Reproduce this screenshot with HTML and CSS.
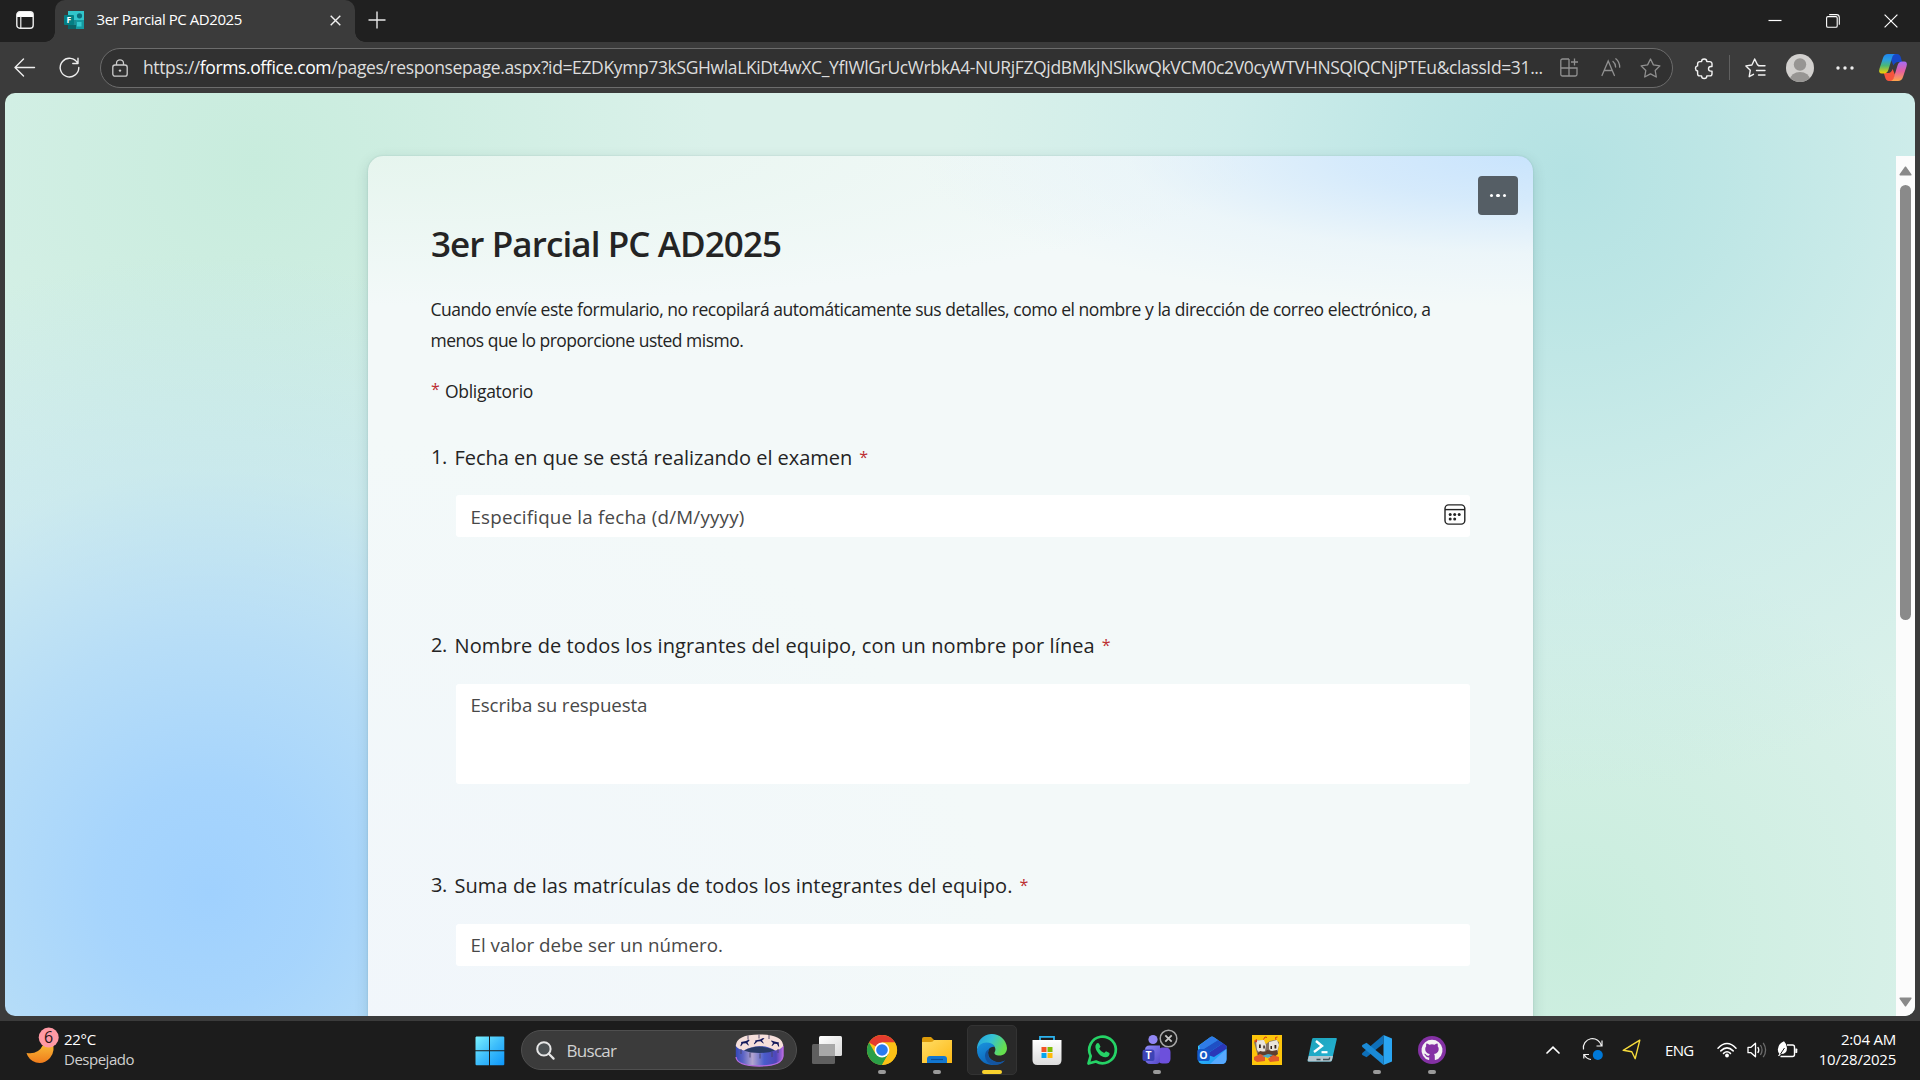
FILE: index.html
```
<!DOCTYPE html>
<html lang="es">
<head>
<meta charset="utf-8">
<title>3er Parcial PC AD2025</title>
<link rel="stylesheet" href="styles.css">
</head>
<body>
<div class="screen">
  <header class="tabstrip">
    <div class="tab-actions">
      <svg width="18" height="18" viewBox="0 0 18 18"><rect x=".8" y=".8" width="16.4" height="16.4" rx="3" fill="none" stroke="#eee" stroke-width="1.4"/><path d="M1 4a3 3 0 0 1 3-3h10a3 3 0 0 1 3 3v2H1z" fill="#fff"/><path d="M4.8 5v12" stroke="#eee" stroke-width="1.2"/></svg>
    </div>
    <div class="tab">
      <svg class="favicon" width="20" height="18" viewBox="0 0 20 18"><rect x="4" y="0" width="16" height="18" rx="1" fill="#1b8e95"/><rect x="4" y="0" width="16" height="9" fill="#31c5cb"/><rect x="12" y="9" width="8" height="9" fill="#159aa1"/><circle cx="15.5" cy="4.8" r="2.6" fill="#0b6e7c"/><rect x="13" y="11" width="4.500" height="4.500" fill="#36c9cf"/><path d="M4 14h8v4H4z" fill="#0b6468"/><rect x="0" y="4" width="10" height="10" rx="1" fill="#037f84"/><text x="2.6" y="12" class="fav-letter">F</text></svg>
      <span class="tab-title">3er Parcial PC AD2025</span>
      <svg class="tab-close" width="11" height="11" viewBox="0 0 11 11"><path d="M.7.7l9.600 9.600M10.300.7.7 10.300" stroke="#f2f2f2" stroke-width="1.400"/></svg>
    </div>
    <svg class="new-tab" width="18" height="18" viewBox="0 0 18 18"><path d="M9 .5v17M.5 9h17" stroke="#e8e8e8" stroke-width="1.400"/></svg>
    <div class="window-controls">
      <svg width="14" height="14" viewBox="0 0 14 14"><path d="M.5 6.500h13" stroke="#fff" stroke-width="1.200"/></svg>
      <svg width="14" height="14" viewBox="0 0 14 14"><rect x=".6" y="2.600" width="10.600" height="10.600" rx="1.300" fill="none" stroke="#fff" stroke-width="1.100"/><path d="M3.200.6h7.300a2.800 2.800 0 0 1 2.800 2.800v7.400" fill="none" stroke="#fff" stroke-width="1.100"/></svg>
      <svg width="14" height="14" viewBox="0 0 14 14"><path d="M.6.6l12.800 12.800M13.400.6.6 13.400" stroke="#fff" stroke-width="1.200"/></svg>
    </div>
  </header>

  <div class="toolbar">
    <svg class="back" width="21" height="19" viewBox="0 0 21 19"><path d="M9.500 1 1 9.500 9.500 18M1.200 9.500H20.500" fill="none" stroke="#eee" stroke-width="1.400" stroke-linecap="round" stroke-linejoin="round"/></svg>
    <svg class="reload" width="21" height="21" viewBox="0 0 21 21"><path d="M18.700 6.200A9.300 9.300 0 1 0 19.800 10.500M19 1.300V6.500H13.800" fill="none" stroke="#eee" stroke-width="1.400" stroke-linecap="round" stroke-linejoin="round"/></svg>
    <div class="address">
      <svg class="lock" width="16" height="18" viewBox="0 0 16 18"><rect x=".8" y="6" width="14.400" height="11.200" rx="2.200" fill="none" stroke="#ccc" stroke-width="1.300"/><path d="M4.500 6V4.300a3.500 3.500 0 0 1 7 0V6" fill="none" stroke="#ccc" stroke-width="1.300"/><circle cx="8" cy="11.600" r="1.200" fill="#ccc"/></svg>
      <span class="url">https://<b>forms.office.com</b>/pages/responsepage.aspx?id=EZDKymp73kSGHwlaLKiDt4wXC_YfIWlGrUcWrbkA4-NURjFZQjdBMkJNSlkwQkVCM0c2V0cyWTVHNSQlQCNjPTEu&amp;classId=31...</span>
      <svg class="in-apps" width="19" height="19" viewBox="0 0 19 19"><path d="M9 1H2.500A1.700 1.700 0 0 0 .8 2.700v13.600A1.700 1.700 0 0 0 2.500 18H15.300A1.700 1.700 0 0 0 17 16.300V10H.8M9 1V18M14.500.5v7M11 4h7" fill="none" stroke="#909090" stroke-width="1.300"/></svg>
      <svg class="in-read" width="20" height="19" viewBox="0 0 20 19"><path d="M1 17.500 7.200 3l6.200 14.500M3.300 12.500h7.800M12 3.500q2.500 2 2.600 5.500M14.800.8Q18.600 4 18.700 9.200" fill="none" stroke="#909090" stroke-width="1.300" stroke-linecap="round"/></svg>
      <svg class="in-star" width="21" height="20" viewBox="0 0 21 20"><path d="M10.500 1l2.900 5.900 6.500 1-4.700 4.600 1.100 6.500-5.800-3.100L4.700 19l1.100-6.500L1.100 7.900l6.500-1z" fill="none" stroke="#909090" stroke-width="1.300" stroke-linejoin="round"/></svg>
    </div>
    <svg class="puzzle" width="20" height="20" viewBox="0 0 20 20"><path d="M7.600 3.600a2.600 2.600 0 0 1 5.200 0h3a2.200 2.200 0 0 1 2.200 2.200v2.700h-1.200a2.300 2.300 0 0 0 0 4.600H18v2.600a2.200 2.200 0 0 1-2.200 2.200H12.800a2.600 2.600 0 0 1-5.200 0H5.800a2.200 2.200 0 0 1-2.200-2.200V13a2.600 2.600 0 0 1 0-5.100V5.800a2.200 2.200 0 0 1 2.200-2.200z" fill="none" stroke="#f2f2f2" stroke-width="1.400" stroke-linejoin="round"/></svg>
    <span class="divider"></span>
    <svg class="favs" width="21" height="20" viewBox="0 0 21 20"><path d="M13.500 7.200 12.600 7 9.700 1 6.900 7l-6 .9 4.400 4.300-1.100 6.500 4.300-2.400M13.600 7.800H20M11.500 12.500h8.500M13.500 17H20" fill="none" stroke="#f2f2f2" stroke-width="1.400" stroke-linecap="round" stroke-linejoin="round"/></svg>
    <svg class="avatar" width="28" height="28" viewBox="0 0 28 28"><defs><clipPath id="av"><circle cx="14" cy="14" r="14"/></clipPath></defs><g clip-path="url(#av)"><rect width="28" height="28" fill="#d2d0ce"/><circle cx="14" cy="10.500" r="6.200" fill="#979593"/><ellipse cx="14" cy="26" rx="10" ry="8" fill="#979593"/></g></svg>
    <svg class="more" width="18" height="4" viewBox="0 0 18 4"><g fill="#eee"><circle cx="2" cy="2" r="1.700"/><circle cx="9" cy="2" r="1.700"/><circle cx="16" cy="2" r="1.700"/></g></svg>
    <svg class="copilot" width="28" height="27" viewBox="0 0 28 27"><defs><linearGradient id="cp1" x1="0" y1="0" x2="0" y2="1"><stop offset="0" stop-color="#1f86ee"/><stop offset=".3" stop-color="#2b9fe0"/><stop offset=".6" stop-color="#4bb873"/><stop offset="1" stop-color="#f8d000"/></linearGradient><linearGradient id="cp2" x1="0" y1="0" x2="0" y2="1"><stop offset="0" stop-color="#a56cf5"/><stop offset=".5" stop-color="#e55fa0"/><stop offset="1" stop-color="#ffa64a"/></linearGradient></defs><path d="M14 0h4q3 0 4 4l1 4h-4q-3 0-4.500 3.500L12 6z" fill="#1748c7"/><path d="M14 27h-4q-3 0-4-4l-1.200-4h4.500q3 0 4.300-4l2.500 6z" fill="#f6553d"/><path d="M9 0h8q-3 0-4 4L9.500 15.500q-1 4-5 4H3q-4 0-2.500-5L4 4q1.200-4 5-4z" fill="url(#cp1)"/><path d="M19 27h-8q3 0 4-4l3.500-11.500q1-4 5-4H25q4 0 2.500 5L24 23q-1.200 4-5 4z" fill="url(#cp2)"/></svg>
  </div>

  <main class="viewport">
    <div class="scroll-area">
      <section class="card">
        <button class="card-menu" aria-label="Más opciones"><i></i><i></i><i></i></button>
        <h1>3er Parcial PC AD2025</h1>
        <p class="desc"><span class="desc-a">Cuando envíe este formulario, no recopilará automáticamente sus detalles, como el nombre y la dirección de correo electrónico, a</span><br><span class="desc-b">menos que lo proporcione usted mismo.</span></p>
        <p class="required"><span class="star">*</span><span>Obligatorio</span></p>

        <div class="question q1">
          <h2><span class="num">1.</span><span class="q-text">Fecha en que se está realizando el examen</span><span class="star">*</span></h2>
          <div class="field"><span>Especifique la fecha (d/M/yyyy)</span>
            <svg width="22" height="21" viewBox="0 0 22 21"><rect x="1" y=".9" width="19.800" height="19.200" rx="3.600" fill="none" stroke="#242424" stroke-width="1.400"/><path d="M1 5.600h20" stroke="#242424" stroke-width="1.400"/><g fill="#242424"><circle cx="6.200" cy="10.500" r="1.500"/><circle cx="10.700" cy="10.500" r="1.500"/><circle cx="15.200" cy="10.500" r="1.500"/><circle cx="6.200" cy="15" r="1.500"/><circle cx="10.700" cy="15" r="1.500"/></g></svg>
          </div>
        </div>
        <div class="question q2">
          <h2><span class="num">2.</span><span class="q-text">Nombre de todos los ingrantes del equipo, con un nombre por línea</span><span class="star">*</span></h2>
          <div class="field tall"><span>Escriba su respuesta</span></div>
        </div>
        <div class="question q3">
          <h2><span class="num">3.</span><span class="q-text">Suma de las matrículas de todos los integrantes del equipo.</span><span class="star">*</span></h2>
          <div class="field"><span>El valor debe ser un número.</span></div>
        </div>
      </section>
      <div class="scrollbar">
        <svg width="13" height="10" viewBox="0 0 13 10"><path d="M6.500 1.200 11.800 8.800H1.200z" fill="#8a8a8a" stroke="#8a8a8a" stroke-width="1.500" stroke-linejoin="round"/></svg>
        <span class="thumb"></span>
        <svg class="down" width="13" height="10" viewBox="0 0 13 10"><path d="M6.500 8.800 11.800 1.200H1.200z" fill="#8a8a8a" stroke="#8a8a8a" stroke-width="1.500" stroke-linejoin="round"/></svg>
      </div>
    </div>
  </main>

  <footer class="taskbar">
    <div class="weather">
      <svg width="36" height="38" viewBox="0 0 36 38"><defs><linearGradient id="mn" x1="0" y1="0" x2="0" y2="1"><stop offset="0" stop-color="#f9c43a"/><stop offset="1" stop-color="#f07c1c"/></linearGradient></defs><path d="M28 14Q32 24 26 31Q20 37.500 12 35.500Q4.500 33 2.500 26Q14 28 19 18z" fill="url(#mn)"/><circle cx="24.700" cy="10.500" r="10" fill="#ff99a4"/><text x="24.500" y="15.700" class="badge-num">6</text></svg>
      <div class="weather-text"><span>22°C</span><span class="sub">Despejado</span></div>
    </div>

    <div class="apps">
      <svg class="start" width="30" height="30" viewBox="0 0 30 30"><defs><linearGradient id="wn" gradientUnits="userSpaceOnUse" x1="0" y1="0" x2="30" y2="30"><stop offset="0" stop-color="#7cf3ff"/><stop offset=".5" stop-color="#3dbdfb"/><stop offset="1" stop-color="#0a94fa"/></linearGradient></defs><path d="M1.300.5H14v13.800H.500V1.300zM15 .5h13.500l.8.8v13H15zM.5 15.300H14v14H1.300l-.8-.8zM15 15.300h14.300v13.200l-.8.8H15z" fill="url(#wn)"/></svg>
      <div class="search">
        <svg width="19" height="19" viewBox="0 0 19 19"><circle cx="7.900" cy="7.900" r="6.700" fill="#4c5153" stroke="#e6e6e6" stroke-width="2"/><path d="M12.800 12.800 17.600 17.600" stroke="#e6e6e6" stroke-width="2.200" stroke-linecap="round"/></svg>
        <span>Buscar</span>
        <svg class="drum" width="49" height="33" viewBox="0 0 49 33"><defs><linearGradient id="dr"><stop offset="0" stop-color="#3448b8"/><stop offset=".15" stop-color="#5a62c4"/><stop offset=".35" stop-color="#b3a4cf"/><stop offset=".6" stop-color="#4a5ccc"/><stop offset=".85" stop-color="#4e46b8"/><stop offset="1" stop-color="#b46adf"/></linearGradient></defs><path d="M.8 10v12q0 10 23.700 10t23.700-10V10z" fill="url(#dr)"/><path d="M1 23q1 9 23.500 9T48 22V12" fill="none" stroke="#b56be0" stroke-width="1.300"/><path d="M.8 12Q1 .5 24.500.5T48.200 12Q45 16 40 16.500 33 12 24.500 12T9 16.500Q3 15 .8 12z" fill="#f6dfdb"/><path d="M9 16.500Q24 8.500 40 16.500q-6 2.500-15.500 2.500T9 16.500z" fill="#283a66"/><path d="M13 1.500v4M24 .5v4M34 1v4M6 15v5M15 18.500v5M25 19.500v5M37 18v5M43 15v4" stroke="#4a4368" stroke-width=".9"/><g fill="#151a5c"><path d="M6 8l5-1 3-1.500.5 1-2 2 1.500 3-1-.2-2-2-3 .3-2 2.700-.7-.3 1-3z"/><path d="M20 6.500l5-1 3-1.500 1.500.5-2.500 2 2 3-1-.2-2.500-2-3 .3-3 2.700-.7-.3 1.700-3z"/><path d="M44 8.500l-4.500-1-3-1-.5.500 2 2-1.500 3 1-.2 2-2 2.500.3 1.500 2.700.7-.3-.5-3z"/></g></svg>
      </div>
      <svg class="app" width="32" height="50" viewBox="0 0 32 50"><defs><linearGradient id="tv" x1="0" y1="0" x2="1" y2="1"><stop offset="0" stop-color="#fff"/><stop offset="1" stop-color="#d9d9d9"/></linearGradient></defs><rect x="8" y="11" width="23" height="20" rx="1.500" fill="url(#tv)"/><rect x="1" y="19" width="23" height="20" rx="1.500" fill="#6e6e6e" fill-opacity=".82"/><path d="M8 19h16v12H8z" fill="#a8a8a8"/></svg>
      <svg class="app" width="32" height="50" viewBox="0 0 32 50"><circle cx="16" cy="25" r="15" fill="#fbc116"/><path d="M16 25 3 17.500A15 15 0 0 1 29 17.500H16z" fill="#e33b2e"/><path d="M3 17.500A15 15 0 0 0 16 40l6.500-11.300L9.500 28.700z" fill="#2a9f47"/><path d="M29 17.500H16L22.500 28.700 16 40A15 15 0 0 0 29 17.500z" fill="#fbc116"/><circle cx="16" cy="25" r="7.400" fill="#fff"/><circle cx="16" cy="25" r="5.800" fill="#2a7bee"/><rect class="dot" x="12" y="45" width="8" height="4" rx="2"/></svg>
      <svg class="app" width="32" height="50" viewBox="0 0 32 50"><defs><linearGradient id="fd" x1="0" y1="0" x2="1" y2="1"><stop offset="0" stop-color="#ffdd66"/><stop offset="1" stop-color="#fdb813"/></linearGradient></defs><path d="M1 14q0-2 2-2h7l3 3v6H1z" fill="#dd9b0a"/><path d="M1 17h9q2 0 3-2h18v23H1z" fill="url(#fd)"/><path d="M6 38v-4q0-3 3-3h14q3 0 3 3v4z" fill="#1277d1"/><path d="M10 34.500h12" stroke="#0a4f99" stroke-width="1.200"/><rect class="dot" x="12" y="45" width="8" height="4" rx="2"/></svg>
      <span class="app active"><svg width="32" height="50" viewBox="0 0 32 50"><defs><linearGradient id="eg1" x1="0" y1="0" x2="1" y2=".4"><stop offset="0" stop-color="#1f9fe0"/><stop offset=".5" stop-color="#35c1d4"/><stop offset="1" stop-color="#66df4e"/></linearGradient><linearGradient id="eg2" x1="0" y1="0" x2=".5" y2="1"><stop offset="0" stop-color="#1993dd"/><stop offset="1" stop-color="#0c62b8"/></linearGradient></defs><path d="M1 25A15 15 0 0 1 31 23c0 5-3.500 7.500-7.500 7.500-4 0-5.500-1.500-5-3 1.500-2 2-7-5-9Q4 17 1 25z" fill="url(#eg1)"/><path d="M1 25q2-7.500 9.500-7.500 5.500 0 8.500 4-7 0-7 6 0 7 8 9.500 5 1 9-1.500Q24.500 40 16 40A15 15 0 0 1 1 25z" fill="url(#eg2)"/><path d="M13 24q-3 9 4 12 6 2.500 12-.5-4 4.500-11 4.500Q9 38 9 31q0-5 4-7z" fill="#14549f"/><rect x="6" y="45" width="20" height="4" rx="2" fill="#f9d22e"/></svg></span>
      <svg class="app" width="32" height="50" viewBox="0 0 32 50"><defs><linearGradient id="st" x1="0" y1="0" x2="0" y2="1"><stop offset="0" stop-color="#fff"/><stop offset="1" stop-color="#dcdcdc"/></linearGradient></defs><path d="M9 16v-4.200h14V16" fill="none" stroke="#2cb3ee" stroke-width="1.800"/><path d="M1.500 15h29v20q0 5-5 5h-19q-5 0-5-5z" fill="url(#st)"/><path d="M10.500 22h5v5h-5z" fill="#f35325"/><path d="M16.500 22h5v5h-5z" fill="#81bc06"/><path d="M10.500 28h5v5h-5z" fill="#05a6f0"/><path d="M16.500 28h5v5h-5z" fill="#ffba08"/></svg>
      <svg class="app" width="32" height="50" viewBox="0 0 32 50"><path d="M2.500 38.500 4.700 31A13.300 13.300 0 1 1 10 36.500z" fill="none" stroke="#25d366" stroke-width="2.700" stroke-linejoin="round"/><path d="M9.500 20.500q1.500-3.500 3.500-2l1.500 3.300-1.300 2q1.500 3 5 4.300l1.800-1.800 3.500 1.700q.5 3.500-3.500 4.200-4 .3-7.500-3.700-3.700-4.500-3-8z" fill="#25d366"/></svg>
      <svg class="app" width="32" height="50" viewBox="0 0 32 50"><defs><linearGradient id="tm" x1="0" y1="0" x2="1" y2="1"><stop offset="0" stop-color="#8f8af8"/><stop offset="1" stop-color="#5548c9"/></linearGradient></defs><rect x="17" y="22.500" width="12.500" height="16" rx="4.500" fill="#6d50dc"/><circle cx="12" cy="14.500" r="4.600" fill="#9287f4"/><path d="M4 25q0-4.500 4.500-4.500H19V35q0 4-4 4H9.500Q4 39 4 33z" fill="url(#tm)"/><rect x="1.500" y="24.500" width="12" height="11.500" rx="2.600" fill="#3d43b5"/><text x="7.500" y="34.200" class="app-letter">T</text><circle cx="27.500" cy="13.500" r="8.300" fill="#1c1c1c" stroke="#a5a5a5" stroke-width="1.500"/><path d="M24.300 10.300l6.400 6.400M30.700 10.300l-6.400 6.400" stroke="#c4c4c4" stroke-width="1.800"/><rect class="dot" x="12" y="45" width="8" height="4" rx="2"/></svg>
      <svg class="app" width="32" height="50" viewBox="0 0 32 50"><defs><linearGradient id="ol" x1="0" y1="0" x2="1" y2="1"><stop offset="0" stop-color="#35d1ff"/><stop offset="1" stop-color="#1b8df0"/></linearGradient></defs><path d="M2 21 14.500 12q1.500-1 3 0L30.500 21V34q0 5-5 5h-18q-5.500 0-5.500-5z" fill="url(#ol)"/><path d="M3 20.500 14.500 12q1.500-1 3 0l4.500 3L4.500 26z" fill="#2f7be8"/><path d="M4.500 26 22 15l5 3.300L10 29.500z" fill="#1f4fc4"/><path d="M10 29.500 27 18.300l3.500 2.500v3L18 32z" fill="#2a37b8"/><path d="M14 39 30.500 24v10q0 5-5 5z" fill="#57a9ff"/><rect x="1.300" y="24" width="12.500" height="12" rx="2.600" fill="#1559c9"/><text x="7.500" y="34.200" class="app-letter">O</text></svg>
      <svg class="app" width="32" height="50" viewBox="0 0 32 50"><rect x="1" y="10" width="30" height="30" fill="#fdc50b"/><path d="M3 17l4-2 5 1 3 3 4-3 5-1 4 2-1 10-4 3-4-1-6 2-7-3z" fill="#857365"/><path d="M5 15.500l8-.5 2 5-1 6-5 2-3-3zM18 17l8-2 2 5-2 7-5 1-3-4z" fill="#e9e4dc"/><path d="M8 19.500h1.800v3.500H8zM23.500 20h1.800v3.500h-1.800zM12.300 20.500h1.500v3h-1.500zM19.500 21H21v3h-1.500z" fill="#31211c"/><path d="M3.500 16l2-1.500v2.500zM12.500 14.500l1.500-2.500 2 .5M25 15l-.5-2.500 2-.5" stroke="#d43c22" fill="none"/><path d="M9 26l5 1 2-2 5 1 5-1 1 4-4 3H9l-3-3z" fill="#5d3f30"/><path d="M3 32l6-3 5 2v5l-8 1-3-2zM17 34l5-4 6 2v4l-9 1z" fill="#df5b2c"/><path d="M11 31l6-2 5 1-5 3z" fill="#4fa9c6"/></svg>
      <svg class="app" width="32" height="50" viewBox="0 0 32 50"><defs><linearGradient id="ps" x1="0" y1="0" x2="1" y2="1"><stop offset="0" stop-color="#1da2b8"/><stop offset="1" stop-color="#24b4d8"/></linearGradient></defs><path d="M7.500 13H30q1 0 .8 1L26 35q-.4 1.500-2 1.500H3q-1.700 0-1.300-1.500L6 14.300Q6.300 13 7.500 13z" fill="url(#ps)"/><path d="M2.800 31H27l-1 4q-.4 1.500-2 1.500H3q-1.700 0-1.300-1.500z" fill="#b4c6ce"/><path d="M10.500 34.500h4M17 34.500h6l.8-2" stroke="#3e5159" stroke-width="1.300" fill="none"/><path d="M10 16l6 5-8 6" fill="none" stroke="#fff" stroke-width="2.400"/><path d="M15.500 27.200h6" stroke="#fff" stroke-width="2.200"/></svg>
      <svg class="app" width="32" height="50" viewBox="0 0 32 50"><path d="M22.500 10 31 13.500V36.500L22.500 40z" fill="#2aa5f2"/><path d="M22.500 10v8.500L5.500 32.300 1.300 30q-.8-1 0-2z" fill="#0e6fb8"/><path d="M22.500 40V31.500L5.500 17.700 1.300 20q-.8 1 0 2z" fill="#1a8ad6"/><rect class="dot" x="12" y="45" width="8" height="4" rx="2"/></svg>
      <svg class="app" width="32" height="50" viewBox="0 0 32 50"><circle cx="16" cy="25" r="14" fill="#8431a4"/><path d="M16 14.800A10.400 10.400 0 0 0 12.700 35.100q.5-.1.500-.7v-2.100q-3 .5-4-2-.4-.9-1.200-1.400 1.200-.5 2.200.9.900 1.400 2.900.8.200-1 .8-1.500-4.700-.8-4.700-5 0-1.700 1-2.800-.4-1.300.2-2.800 1.400 0 2.900 1.200a9 9 0 0 1 5.300 0q1.500-1.200 2.900-1.200.6 1.500.2 2.800 1 1.100 1 2.800 0 4.200-4.700 5 .8.700.8 2.300v3q0 .6.500.7A10.400 10.400 0 0 0 16 14.800z" fill="#f3f3f3"/><rect class="dot" x="12" y="45" width="8" height="4" rx="2"/></svg>
    </div>

    <div class="tray">
      <svg class="chev" width="14" height="8" viewBox="0 0 14 8"><path d="M1 7 7 1.200 13 7" fill="none" stroke="#fff" stroke-width="1.700" stroke-linecap="round"/></svg>
      <svg class="sync" width="22" height="22" viewBox="0 0 22 22"><path d="M1.500 10.500A9 9 0 0 1 19.500 7M20 1.500V7H14.500M1.800 19.500V15.500H7M2.500 16q2 4 6.500 4.500" fill="none" stroke="#f3f3f3" stroke-width="1.200"/><circle cx="15.800" cy="16" r="5" fill="#0078d7"/></svg>
      <svg class="loc" width="19" height="21" viewBox="0 0 19 21"><path d="M17.800 1.200 1.200 11.300 9.800 12.700 13.200 19.700z" fill="none" stroke="#f7dc3c" stroke-width="1.400" stroke-linejoin="round"/></svg>
      <span class="lang">ENG</span>
      <svg class="wifi" width="20" height="16" viewBox="0 0 20 16"><g fill="none" stroke="#fff" stroke-width="1.500" stroke-linecap="round"><path d="M1 6.200Q10-3 19 6.200M3.800 8.900q6.200-6 12.400 0M6.500 11.400q3.500-3.200 7 0"/></g><circle cx="10" cy="13.500" r="1.900" fill="#fff"/></svg>
      <svg class="vol" width="21" height="18" viewBox="0 0 21 18"><path d="M1 6.300h3L8.500 2.200v13.600L4 11.700H1z" fill="none" stroke="#fff" stroke-width="1.300" stroke-linejoin="round"/><path d="M10.800 6q2 3 0 6" fill="none" stroke="#fff" stroke-width="1.300"/><path d="M13.400 4q3.300 5 0 10M16.200 1.800q4.800 7.200 0 14.400" fill="none" stroke="#6c6c6c" stroke-width="1.300"/></svg>
      <svg class="batt" width="21" height="18" viewBox="0 0 21 18"><path d="M10 4h5.500a2 2 0 0 1 2 2v7.500a2 2 0 0 1-2 2H3.500" fill="none" stroke="#fff" stroke-width="1.400"/><path d="M18.300 7.500h1.200q.8 0 .8.800v3q0 .8-.8.800h-1.200z" fill="#fff"/><path d="M7 .3Q1 3 .8 8.500q0 3 1.700 4.500L1 14.500l1 .8 2-2.300q6 0 6-6Q9.800 3 7 .3z" fill="#fff"/><path d="M3.500 13 7.500 7" stroke="#1c1c1c" stroke-width="1"/></svg>
      <div class="clock"><span class="time">2:04 AM</span><span class="date">10/28/2025</span></div>
    </div>
  </footer>
</div>
</body>
</html>
```
FILE: styles.css
```
* { box-sizing: border-box; }
html, body { margin: 0; padding: 0; }
body { background: #3b3b3b; font-family: "Open Sans", "Noto Sans", sans-serif; }
h1, h2, p { margin: 0; font-weight: 400; }
svg { display: block; flex: none; overflow: visible; }

.screen { width: 1920px; height: 1080px; overflow: hidden; display: flex; flex-direction: column; background: #3b3b3b; }

/* tab strip */
.tabstrip { height: 42px; flex: none; display: flex; align-items: center; background: #202020; }
.tab-actions { width: 55px; height: 42px; padding: 11px 0 0 16px; }
.tab { position: relative; width: 300px; height: 42px; display: flex; align-items: center; padding: 0 14px 2px 9px; background: #3b3b3b; border-radius: 10px 10px 0 0; }
.tab::before, .tab::after { content: ""; position: absolute; bottom: 0; width: 10px; height: 10px; }
.tab::before { left: -10px; background: radial-gradient(circle at 0 0, transparent 9.500px, #3b3b3b 10px); }
.tab::after { right: -10px; background: radial-gradient(circle at 100% 0, transparent 9.500px, #3b3b3b 10px); }
.favicon { margin-right: 12.500px; }
.fav-letter { font: 700 8.500px "Open Sans", sans-serif; fill: #fff; }
.tab-title { flex: 1; color: #fff; font-size: 15px; line-height: 20px; padding-bottom: 2px; letter-spacing: -.44px; white-space: nowrap; }
.new-tab { margin: 0 0 2px 13px; }
.window-controls { margin-left: auto; display: flex; gap: 44px; padding-right: 22px; }

/* toolbar */
.toolbar { height: 51px; flex: none; display: flex; align-items: center; background: #3b3b3b; }
.back { margin-left: 14px; }
.reload { margin-left: 24px; }
.address { width: 1573px; height: 40px; margin-left: 20px; display: flex; align-items: center; padding: 0 10px 0 11px; border: 1.500px solid #6c6c6c; border-radius: 20px; background: #313131; }
.lock { margin: 0 15px 0 0; }
.url { width: 1417px; flex: none; color: #ddd; font-size: 17.500px; letter-spacing: -.371px; white-space: nowrap; line-height: 30px; padding-bottom: 1px; }
.url b { font-weight: 400; color: #fff; }
.in-read { margin-left: 21.500px; }
.in-star { margin-left: 19.500px; }
.puzzle { margin-left: 21px; }
.divider { width: 1px; height: 25px; margin-left: 15px; background: #606060; }
.favs { margin-left: 15px; }
.avatar { margin-left: 20px; }
.more { margin-left: 22px; }
.copilot { margin-left: 25px; }

/* web page */
.viewport {
  width: 1910px; height: 923px; margin-left: 5px; flex: none; padding-top: 63px; overflow: hidden; border-radius: 10px;
  background:
    radial-gradient(circle 640px at 205px 800px, #a0d1fe 0%, rgba(162,210,254,.92) 17%, rgba(170,214,252,.72) 40%, rgba(185,223,247,.38) 66%, rgba(218,240,236,0) 100%),
    radial-gradient(circle 460px at 250px 70px, #c8ecdd 0%, rgba(200,236,221,.7) 30%, rgba(216,240,232,0) 100%),
    radial-gradient(circle 620px at 1565px 80px, #b4e2e3 0%, rgba(182,227,228,.78) 25%, rgba(192,231,233,.5) 55%, rgba(221,243,236,0) 100%),
    radial-gradient(circle 400px at 1570px 840px, #c9eddd 0%, rgba(201,237,221,.65) 35%, rgba(221,243,236,0) 100%),
    #daf1ea;
}
.scroll-area { height: 860px; display: flex; }
.card {
  position: relative; width: 1165px; height: 880px; margin-left: 363px; padding: 63px 63px 0;
  border-radius: 15px 15px 0 0; box-shadow: 0 4px 14px rgba(0,60,60,.16), 0 0 2px rgba(0,60,60,.14);
  background:
    radial-gradient(ellipse 620px 150px at 100% 0, #c9e4fd 0%, rgba(205,230,252,.78) 30%, rgba(225,240,250,.4) 65%, rgba(243,249,249,0) 100%),
    radial-gradient(ellipse 900px 150px at 0 0, #e6f5ee 0%, rgba(243,249,249,0) 100%),
    radial-gradient(ellipse 650px 600px at 0 100%, #f1f6fb 0%, rgba(243,249,249,0) 100%),
    #f3f9f9;
}
.card-menu { position: absolute; top: 20px; right: 15px; width: 40px; height: 39px; padding: 0; border: 0; border-radius: 4px; background: #555e65; display: flex; justify-content: center; align-items: center; gap: 3px; }
.card-menu i { width: 3.500px; height: 3.500px; border-radius: 50%; background: #fff; }

h1 { height: 48px; color: #242424; font-size: 35px; line-height: 50px; font-weight: 600; letter-spacing: -.91px; white-space: nowrap; }
.desc { margin-top: 27px; height: 62px; color: #242424; font-size: 17.500px; line-height: 31px; white-space: nowrap; margin-left: -.5px; }
.desc-a { letter-spacing: -.461px; }
.desc-b { letter-spacing: -.5px; }
.required { margin-top: 20px; height: 31px; display: flex; color: #242424; font-size: 17.500px; line-height: 31px; letter-spacing: -.295px; }
.star { color: #bc2f32; font-size: 16px; letter-spacing: 0; }
.required .star { width: 14px; margin-top: -2px; }

.question h2 { display: flex; height: 28px; color: #242424; font-size: 20px; line-height: 30px; white-space: nowrap; }
.question .num { width: 23.500px; margin-top: -1px; letter-spacing: -.5px; }
.question .star { margin: -1px 0 0 7px; }
.q1 { margin-top: 36px; }
.q2 { margin-top: 94px; }
.q3 { margin-top: 87px; }
.q1 .q-text { letter-spacing: -.02px; }
.q2 .q-text { letter-spacing: .1px; }
.q3 .q-text { letter-spacing: .065px; }
.field { width: 1014px; height: 42px; margin: 25px 0 0 25px; padding: 0 4px 0 14.500px; display: flex; justify-content: space-between; align-items: flex-start; border-radius: 3px; background: #fff; color: #484848; font-size: 18.750px; line-height: 42px; white-space: nowrap; }
.field svg { margin-top: 9px; }
.q1 .field { margin-top: 24px; line-height: 44px; letter-spacing: .199px; }
.q2 .field { letter-spacing: -.13px; }
.q3 .field { letter-spacing: .02px; }
.field.tall { height: 100px; line-height: 41px; }

.scrollbar { width: 19px; height: 860px; margin-left: 363px; display: flex; flex-direction: column; align-items: center; padding-top: 10px; background: #fcfcfc; }
.thumb { width: 11px; height: 435px; margin-top: 9px; border-radius: 6px; background: #8a8a8a; }
.down { margin-top: 377px; }

/* taskbar */
.taskbar { height: 59px; margin-top: 5px; display: flex; background: #1c1c1c; color: #fff; font-size: 15px; }
.weather { width: 474.500px; flex: none; display: flex; padding: 6px 0 0 24px; }
.badge-num { font: 16px "Open Sans", sans-serif; fill: #2a1517; text-anchor: middle; }
.weather-text { display: flex; flex-direction: column; line-height: 20px; margin: 2px 0 0 4px; letter-spacing: -.3px; }
.weather-text .sub { color: #cfcfcf; letter-spacing: -.488px; }
.apps { width: 971px; flex: none; display: flex; align-items: flex-start; padding-top: 4px; }
.start { margin-top: 11px; }
.search { width: 276px; flex: none; height: 40px; margin: 5px 14px 0 16px; padding: 0 12px 0 14px; display: flex; align-items: center; border: 1px solid #4f4f4f; border-radius: 20px; background: #3b3b3b; }
.search span { flex: 1; margin-left: 12px; color: #d2d2d2; font-size: 17px; letter-spacing: -.7px; }
.drum { margin-bottom: 0; }
.app { width: 32px; height: 50px; margin-right: 23px; flex: none; }
.app.active { width: 50px; margin: 0 14px 0 -9px; padding-left: 8px; border: 1px solid #333; border-radius: 5px; background: #292929; }
.app.active svg { margin-top: -1px; }
.dot { fill: #9a9a9a; }
.app-letter { font: 700 10.500px "Open Sans", sans-serif; fill: #fff; text-anchor: middle; }

.tray { flex: 1; display: flex; align-items: center; padding: 0 0 2px 100px; }
.sync { margin-left: 22.500px; }
.loc { margin-left: 18px; }
.lang { width: 29px; margin-left: 24px; letter-spacing: -.68px; }
.wifi { margin-left: 23px; }
.vol { margin-left: 10px; }
.batt { margin-left: 9px; }
.clock { margin-left: auto; padding: 0 24px 2px 0; display: flex; flex-direction: column; align-items: flex-end; line-height: 20px; white-space: nowrap; }
.time { letter-spacing: -.22px; }
.date { letter-spacing: -.24px; }
```
